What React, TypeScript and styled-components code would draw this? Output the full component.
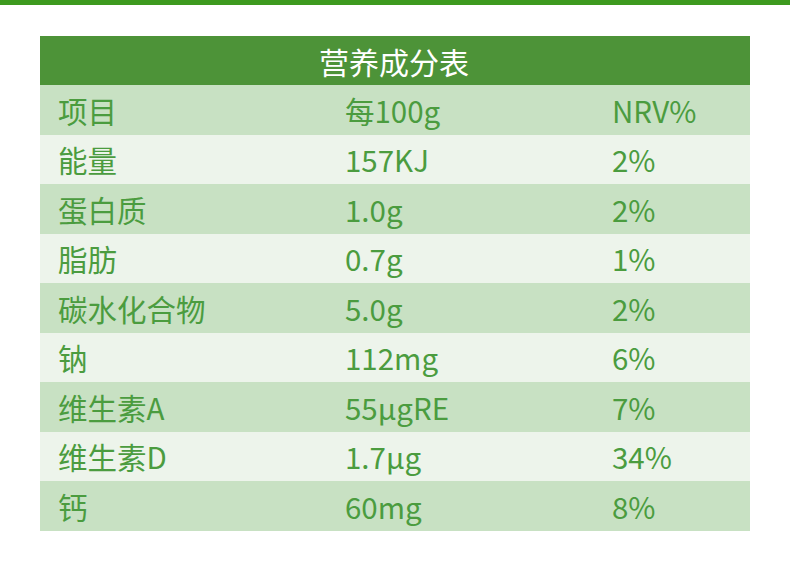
import React from "react";
import styled, { createGlobalStyle } from "styled-components";

const Global = createGlobalStyle`
  html, body { margin: 0; padding: 0; background: #ffffff; }
  body { font-family: "Noto Sans CJK SC", "Noto Sans", sans-serif; }
`;

const Page = styled.div`
  width: 790px;
  height: 564px;
  background: #ffffff;
  display: flex;
  flex-direction: column;
`;

const TopBar = styled.div`
  height: 5px;
  background: #3d9a1f;
`;

const Wrap = styled.div`
  padding: 31px 40px 0 40px;
`;

const Table = styled.div`
  width: 710px;
  display: flex;
  flex-direction: column;
`;

const Header = styled.div`
  height: 49px;
  background: #4d9338;
  color: #ffffff;
  font-size: 30px;
  display: flex;
  align-items: center;
  justify-content: center;
  padding-right: 2px;
`;

const Row = styled.div<{ $dark: boolean }>`
  height: 49.5px;
  background: ${(p) => (p.$dark ? "#c8e1c3" : "#edf4eb")};
  display: grid;
  grid-template-columns: 287px 267px 1fr;
  align-items: center;
  padding-left: 18px;
  color: #4b9c3f;
  font-size: 29.5px;
  line-height: 1;
`;

const Cell = styled.div`
  white-space: nowrap;
  padding-top: 1px;
`;

const rows: [string, string, string][] = [
  ["项目", "每100g", "NRV%"],
  ["能量", "157KJ", "2%"],
  ["蛋白质", "1.0g", "2%"],
  ["脂肪", "0.7g", "1%"],
  ["碳水化合物", "5.0g", "2%"],
  ["钠", "112mg", "6%"],
  ["维生素A", "55μgRE", "7%"],
  ["维生素D", "1.7μg", "34%"],
  ["钙", "60mg", "8%"],
];

export default function App() {
  return (
    <Page>
      <Global />
      <TopBar />
      <Wrap>
        <Table>
          <Header>营养成分表</Header>
          {rows.map((r, i) => (
            <Row key={i} $dark={i % 2 === 0}>
              <Cell>{r[0]}</Cell>
              <Cell>{r[1]}</Cell>
              <Cell>{r[2]}</Cell>
            </Row>
          ))}
        </Table>
      </Wrap>
    </Page>
  );
}
